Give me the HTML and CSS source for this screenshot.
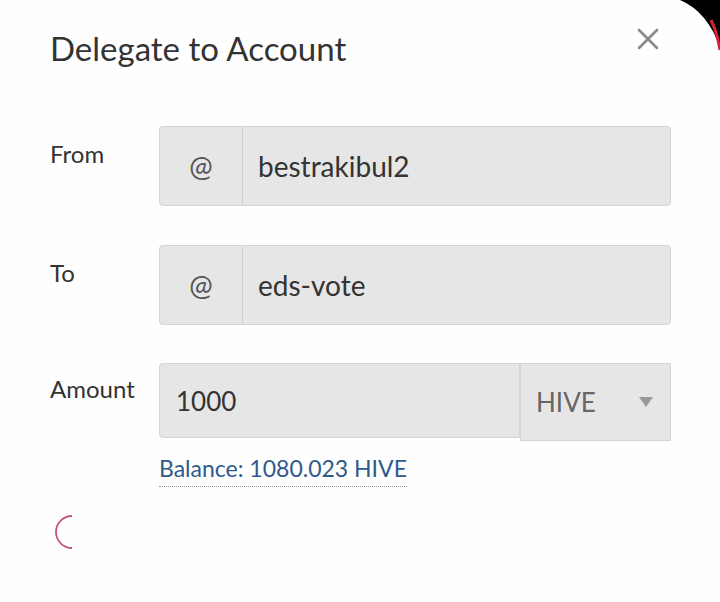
FILE: index.html
```html
<!DOCTYPE html>
<html>
<head>
<meta charset="utf-8">
<link rel="stylesheet" href="styles.css">
</head>
<body>
<div class="modal">
  <div class="header">
    <h1 class="title">Delegate to Account</h1>
    <button class="close" aria-label="Close">
      <svg width="24" height="24" viewBox="0 0 24 24"><path d="M3 3 L21 21 M21 3 L3 21" stroke="#8a8a8a" stroke-width="2.6" stroke-linecap="round" fill="none"/></svg>
    </button>
  </div>
  <div class="form">
    <div class="row">
      <label class="label">From</label>
      <div class="group">
        <span class="addon">@</span>
        <span class="field">bestrakibul2</span>
      </div>
    </div>
    <div class="row">
      <label class="label">To</label>
      <div class="group">
        <span class="addon">@</span>
        <span class="field">eds-vote</span>
      </div>
    </div>
    <div class="row row-amount">
      <label class="label">Amount</label>
      <div class="amount">
        <span class="amount-field">1000</span>
        <span class="select">HIVE<span class="caret"></span></span>
      </div>
    </div>
    <div class="row row-balance">
      <span></span>
      <div><a class="balance">Balance: 1080.023 HIVE</a></div>
    </div>
  </div>
  <div class="spinner">
    <svg width="40" height="40" viewBox="0 0 40 40"><path d="M22 4 A16 16 0 0 0 22 36" stroke="#c4577c" stroke-width="1.8" fill="none"/></svg>
  </div>
</div>
<svg class="corner" width="60" height="60" viewBox="660 0 60 60">
  <path d="M680 0 Q708 12 720 48 L720 0 Z" fill="#000"/>
  <path d="M711 20 Q717 32 720 50" stroke="#d0203c" stroke-width="3" fill="none"/>
</svg>
</body>
</html>
```
FILE: styles.css
```css
html, body {
  margin: 0;
  padding: 0;
  background: #fefefe;
}
body {
  width: 720px;
  height: 602px;
  overflow: hidden;
  position: relative;
  font-family: Lato, "Open Sans", sans-serif;
  color: #333;
}
.modal {
  padding: 0 49px 0 50px;
}
.header {
  display: flex;
  justify-content: space-between;
  align-items: flex-start;
  padding-top: 27px;
}
.title {
  margin: 0;
  font-size: 33px;
  font-weight: 400;
  line-height: 42px;
  color: #333;
  letter-spacing: 0;
}
.close {
  border: 0;
  background: none;
  padding: 0;
  margin: 0 11px 0 0;
  width: 24px;
  height: 24px;
  line-height: 0;
}
.form {
  margin-top: 57px;
  display: flex;
  flex-direction: column;
  gap: 39px;
}
.row {
  display: grid;
  grid-template-columns: 109px 512px;
}
.label {
  font-size: 24px;
  padding-top: 13px;
  line-height: 30px;
}
.group {
  display: flex;
  height: 78px;
  background: #e6e6e6;
  border: 1px solid #d4d4d4;
  border-radius: 4px;
}
.addon {
  width: 82px;
  border-right: 1px solid #d0d0d0;
  display: flex;
  align-items: center;
  justify-content: center;
  font-size: 28px;
  color: #555;
}
.field {
  display: flex;
  align-items: center;
  padding-left: 15px;
  font-size: 28px;
  color: #333;
}
.row-amount .label {
  padding-top: 11px;
}
.row-amount {
  margin-top: -1px;
}
.amount {
  display: flex;
  align-items: flex-start;
}
.amount-field {
  width: 343px;
  height: 73px;
  background: #e6e6e6;
  border: 1px solid #d4d4d4;
  border-radius: 4px 0 0 4px;
  display: flex;
  align-items: center;
  padding-left: 16px;
  font-size: 26px;
  color: #333;
}
.select {
  flex: 1;
  background: #e6e6e6;
  border: 1px solid #d4d4d4;
  display: flex;
  align-items: center;
  justify-content: space-between;
  padding: 0 17px 0 15px;
  box-sizing: border-box;
  height: 78px;
  font-size: 26px;
  color: #666;
}
.caret {
  width: 0;
  height: 0;
  border-left: 7px solid transparent;
  border-right: 7px solid transparent;
  border-top: 10px solid #999;
}
.row-balance {
  margin-top: -25px;
}
.balance {
  font-size: 23px;
  color: #2f5a8c;
  border-bottom: 1px dotted #999;
  padding-bottom: 5px;
  display: inline-block;
  line-height: 26px;
}
.spinner {
  margin-top: 25px;
  margin-left: 0;
  width: 40px;
  height: 40px;
}
.corner {
  position: absolute;
  top: 0;
  right: 0;
}
```
